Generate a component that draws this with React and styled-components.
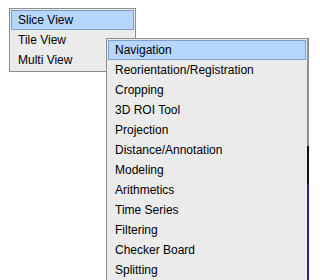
import React from 'react'
import styled, { createGlobalStyle } from 'styled-components'

const GlobalStyle = createGlobalStyle`
  html, body {
    margin: 0;
    padding: 0;
    background: #ffffff;
    overflow: hidden;
  }
  body {
    font-family: "Liberation Sans", Arial, sans-serif;
    font-size: 12px;
  }
`

const Page = styled.div`
  position: relative;
  width: 320px;
  height: 280px;
  padding: 8px 0 0 9px;
  box-sizing: border-box;
`

const Menu = styled.ul`
  list-style: none;
  margin: 0;
  padding: 1px;
  width: ${p => p.$width}px;
  box-sizing: border-box;
  background: #ebebeb;
  border: 1px solid #8e8e8e;
  display: flex;
  flex-direction: column;
`

// submenu hangs over the first menu, so it is placed on top of it
const SubMenu = styled(Menu)`
  position: absolute;
  left: 106px;
  top: 38px;
  border-right: none;
  padding-bottom: 20px;
  &::after {
    content: "";
    position: absolute;
    top: -1px;
    right: -2px;
    width: 2px;
    height: 260px;
    background: linear-gradient(
      to bottom,
      #8e8e8e 0,
      #8e8e8e 108px,
      #111111 108px,
      #111111 146px,
      #3a1a8e 146px,
      #3a1a8e 100%
    );
  }
`

const Item = styled.li`
  height: 20px;
  line-height: 18px;
  box-sizing: border-box;
  padding-left: 6px;
  color: #000;
  white-space: nowrap;
  border: 1px solid ${p => (p.$active ? '#7f9fc9' : 'transparent')};
  background: ${p => (p.$active ? '#b6d6fc' : 'transparent')};
`

const views = ['Slice View', 'Tile View', 'Multi View']
const tools = [
  'Navigation',
  'Reorientation/Registration',
  'Cropping',
  '3D ROI Tool',
  'Projection',
  'Distance/Annotation',
  'Modeling',
  'Arithmetics',
  'Time Series',
  'Filtering',
  'Checker Board',
  'Splitting'
]

export default function App() {
  return (
    <>
      <GlobalStyle />
      <Page>
        <Menu $width={127}>
          {views.map((v, i) => (
            <Item key={v} $active={i === 0}>{v}</Item>
          ))}
        </Menu>
        <SubMenu $width={201}>
          {tools.map((t, i) => (
            <Item key={t} $active={i === 0}>{t}</Item>
          ))}
        </SubMenu>
      </Page>
    </>
  )
}
